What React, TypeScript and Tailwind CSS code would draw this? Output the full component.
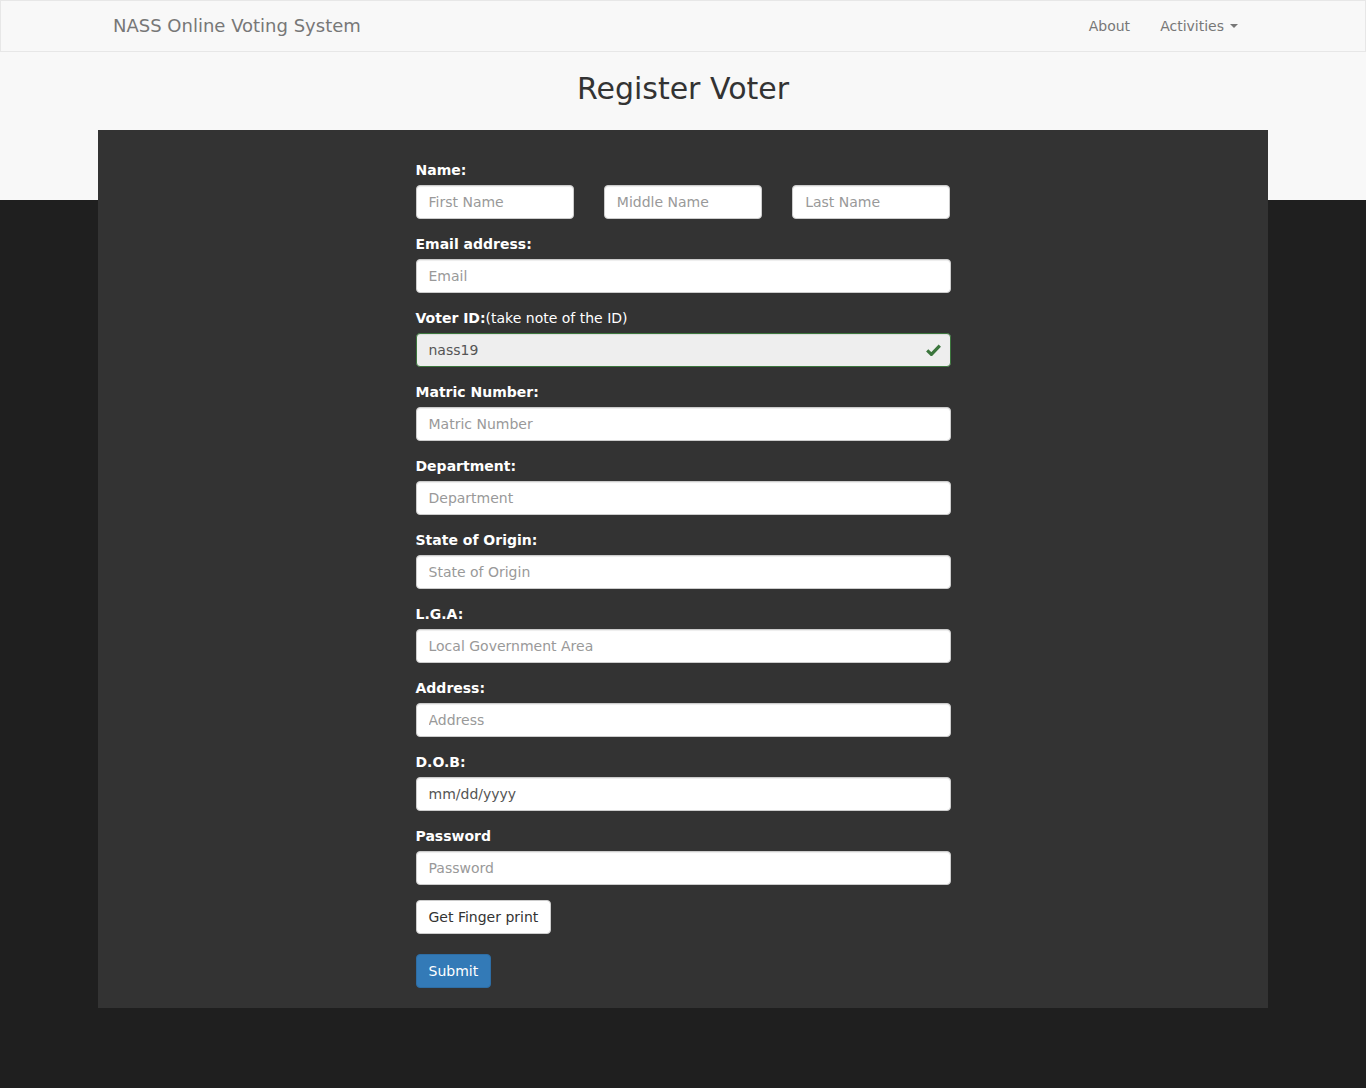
import React from "react";

const inputCls =
  "block w-full h-[34px] px-3 py-[6px] text-[14px] leading-[20px] text-[#555] bg-white border border-[#ccc] rounded-[4px] shadow-[inset_0_1px_1px_rgba(0,0,0,0.075)] placeholder:text-[#999] outline-none";

function Group({ label, extra, children }: { label: string; extra?: string; children: React.ReactNode }) {
  return (
    <div className="mb-[15px]">
      <label className="block mb-[5px] text-[14px] leading-[20px] font-bold text-white">
        {label}
        {extra && <span className="font-normal">{extra}</span>}
      </label>
      {children}
    </div>
  );
}

export default function App() {
  return (
    <div className="min-h-[1088px] bg-[#1f1f1f] font-['DejaVu_Sans',sans-serif] text-[14px] leading-[20px] text-[#333]">
      <nav className="h-[52px] bg-[#f8f8f8] border border-[#e7e7e7]">
        <div className="w-[1170px] mx-auto px-[15px] flex items-center justify-between h-[50px]">
          <div className="text-[18px] leading-[20px] text-[#777]">NASS Online Voting System</div>
          <div className="flex items-center text-[14px] text-[#777] pr-[15px]">
            <span className="px-[15px]">About</span>
            <span className="pl-[15px] flex items-center">
              Activities
              <span className="ml-[6px] inline-block w-0 h-0 border-l-[4px] border-r-[4px] border-t-[4px] border-l-transparent border-r-transparent border-t-[#777]" />
            </span>
          </div>
        </div>
      </nav>
      <div className="h-[148px] bg-[#f8f8f8] pt-[20px]">
        <h1 className="text-center text-[30px] leading-[33px] text-[#333] font-normal">Register Voter</h1>
      </div>
      <div className="relative -mt-[70px] w-[1170px] mx-auto bg-[#333] pt-[30px] pb-[20px]">
        <div className="w-[535px] mx-auto">
          <Group label="Name:">
            <div className="grid grid-cols-3 gap-[30px]">
              <input className={inputCls} placeholder="First Name" />
              <input className={inputCls} placeholder="Middle Name" />
              <input className={inputCls} placeholder="Last Name" />
            </div>
          </Group>
          <Group label="Email address:">
            <input className={inputCls} placeholder="Email" />
          </Group>
          <Group label="Voter ID:" extra="(take note of the ID)">
            <div className="relative">
              <input
                readOnly
                value="nass19"
                className="block w-full h-[34px] pl-3 pr-[42px] py-[6px] text-[14px] leading-[20px] text-[#555] bg-[#eee] border border-[#3c763d] rounded-[4px] shadow-[inset_0_1px_1px_rgba(0,0,0,0.075)] outline-none"
              />
              <span className="absolute right-0 top-0 w-[34px] h-[34px] flex items-center justify-center">
                <svg width="15" height="12" viewBox="0 0 15 12">
                  <path d="M1.2 6.4 L5.4 10.4 L13.8 1.6" fill="none" stroke="#3c763d" strokeWidth="3.2" strokeLinejoin="miter" />
                </svg>
              </span>
            </div>
          </Group>
          <Group label="Matric Number:">
            <input className={inputCls} placeholder="Matric Number" />
          </Group>
          <Group label="Department:">
            <input className={inputCls} placeholder="Department" />
          </Group>
          <Group label="State of Origin:">
            <input className={inputCls} placeholder="State of Origin" />
          </Group>
          <Group label="L.G.A:">
            <input className={inputCls} placeholder="Local Government Area" />
          </Group>
          <Group label="Address:">
            <input className={inputCls} placeholder="Address" />
          </Group>
          <Group label="D.O.B:">
            <input className={inputCls} readOnly value="mm/dd/yyyy" />
          </Group>
          <Group label="Password">
            <input className={inputCls} type="password" placeholder="Password" />
          </Group>
          <div className="mb-[20px]">
            <button className="h-[34px] px-3 text-[14px] leading-[20px] text-[#333] bg-white border border-[#ccc] rounded-[4px]">
              Get Finger print
            </button>
          </div>
          <button className="h-[34px] px-3 text-[14px] leading-[20px] text-white bg-[#337ab7] border border-[#2e6da4] rounded-[4px]">
            Submit
          </button>
        </div>
      </div>
    </div>
  );
}
